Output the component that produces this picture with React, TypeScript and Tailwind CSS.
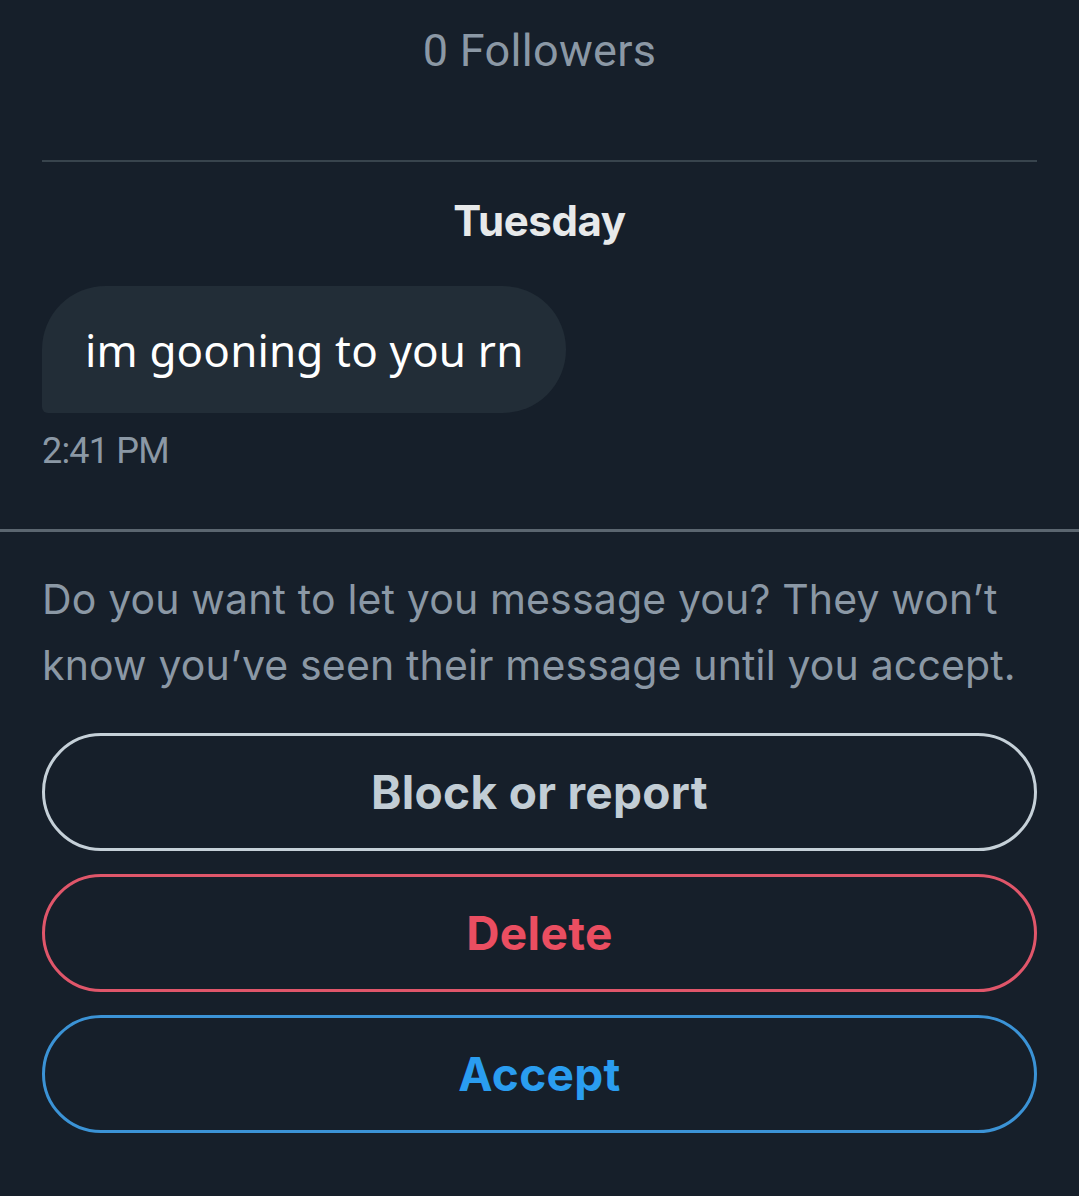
import React from "react";

export default function App() {
  return (
    <div className="w-[1079px] h-[1196px] overflow-hidden bg-[#161f2a] flex flex-col">
      <div className="h-[100px] flex items-center justify-center">
        <span className="text-[45px] leading-none text-[#8b98a5] font-['Roboto',sans-serif] tracking-[0.3px]">0 Followers</span>
      </div>
      <div className="mt-[60px] mx-[42px] h-[2px] bg-[#38444d]" />
      <div className="h-[118px] flex items-center justify-center">
        <span className="text-[42px] leading-none font-bold text-[#e7e9ea] font-['Inter',sans-serif] tracking-[-0.4px]">Tuesday</span>
      </div>
      <div className="mt-[6px] ml-[42px] self-start h-[127px] pl-[43px] pr-[43px] flex items-center bg-[#222d37] rounded-[64px] rounded-bl-[6px]">
        <span className="text-[44px] leading-none text-white font-['Noto_Sans',sans-serif] tracking-[0.15px]">im gooning to you rn</span>
      </div>
      <div className="h-[76px] ml-[42px] flex items-center">
        <span className="text-[36px] leading-none text-[#8b98a5] font-['Roboto',sans-serif] tracking-[-0.8px]">2:41 PM</span>
      </div>
      <div className="mt-[40px] h-[3px] bg-[#5b6670]" />
      <p className="mt-[34px] mx-[42px] text-[41px] leading-[66px] text-[#8b98a5] font-['Inter',sans-serif] tracking-[0.15px]">
        Do you want to let you message you? They won’t know you’ve seen their message until you accept.
      </p>
      <div className="mt-[35px] mx-[42px] flex flex-col gap-[23px]">
        <button className="h-[118px] rounded-full border-[3px] border-[#c5d0d8] flex items-center justify-center">
          <span className="text-[46px] font-bold text-[#c2cdd5] font-['Inter',sans-serif] tracking-[0.3px]">Block or report</span>
        </button>
        <button className="h-[118px] rounded-full border-[3px] border-[#e0566a] flex items-center justify-center">
          <span className="text-[46px] font-bold text-[#ea4e61] font-['Inter',sans-serif] tracking-[0.4px]">Delete</span>
        </button>
        <button className="h-[118px] rounded-full border-[3px] border-[#3b93d6] flex items-center justify-center">
          <span className="text-[46px] font-bold text-[#2a9df0] font-['Inter',sans-serif] tracking-[0.3px]">Accept</span>
        </button>
      </div>
    </div>
  );
}
